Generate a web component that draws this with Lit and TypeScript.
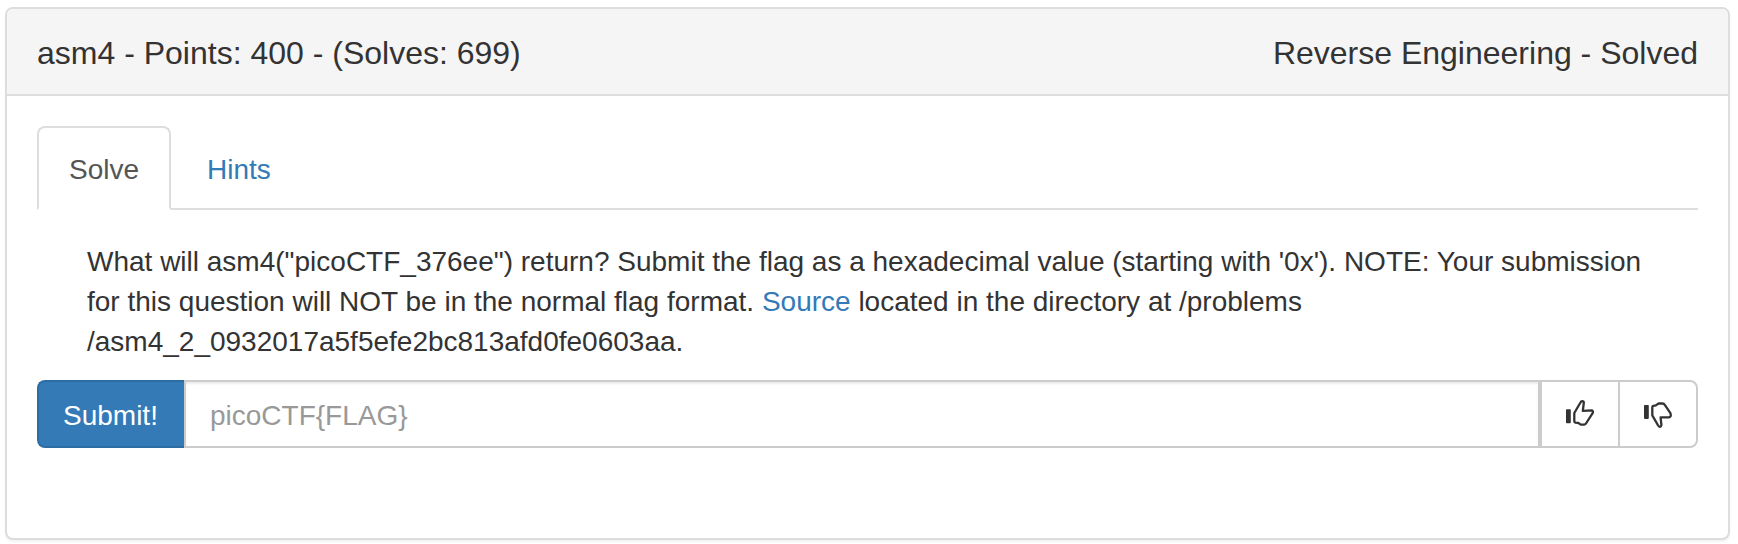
import { LitElement, html, css } from "lit";
import { customElement, state } from "lit/decorators.js";

@customElement("app-root")
export class AppRoot extends LitElement {
  static styles = css`
    :host {
      display: block;
      padding: 7px 8px 4px 5px;
      font-family: "Liberation Sans", Arial, sans-serif;
      font-size: 28px;
      line-height: 40px;
      color: #333;
      background: #fff;
    }
    * {
      box-sizing: border-box;
    }
    a {
      color: #337ab7;
      text-decoration: none;
    }
    .panel {
      border: 2px solid #ddd;
      border-radius: 8px;
      background: #fff;
      box-shadow: 0 2px 2px rgba(0, 0, 0, 0.05);
    }
    .heading {
      display: flex;
      justify-content: space-between;
      gap: 30px;
      padding: 27px 30px 23px;
      border-bottom: 2px solid #ddd;
      border-radius: 6px 6px 0 0;
      background: #f5f5f5;
    }
    .title {
      margin: 0;
      font-size: 32px;
      font-weight: 400;
      line-height: 35px;
    }
    .body {
      padding: 30px 30px 90px;
    }
    .tabs {
      display: flex;
      gap: 4px;
      border-bottom: 2px solid #ddd;
    }
    .tab {
      margin-bottom: -2px;
      padding: 22px 30px 18px;
      border: 2px solid transparent;
      border-radius: 8px 8px 0 0;
    }
    .tab.active {
      color: #555;
      background: #fff;
      border-color: #ddd #ddd #fff;
    }
    .description {
      margin: 0;
      padding: 32px 50px 18px;
    }
    .path {
      white-space: nowrap;
    }
    .entry {
      display: flex;
    }
    .btn,
    .flag {
      margin: 0;
      padding: 14px 24px 10px;
      border: 2px solid #ccc;
      border-radius: 0;
      font: inherit;
      color: #333;
      background: #fff;
    }
    .submit {
      color: #fff;
      background: #337ab7;
      border-color: #2e6da4;
      border-right: 0;
      padding-right: 26px;
      border-radius: 8px 0 0 8px;
    }
    .flag {
      flex: 1;
      min-width: 0;
      height: 68px;
      color: #555;
      box-shadow: inset 0 2px 2px rgba(0, 0, 0, 0.075);
    }
    .flag::placeholder {
      color: #999;
      opacity: 1;
    }
    .vote {
      display: flex;
      align-items: center;
      padding: 12px 24px;
    }
    .vote + .vote {
      margin-left: -2px;
      border-radius: 0 8px 8px 0;
    }
    .icon {
      display: block;
      width: 28px;
      height: 28px;
    }
  `;

  @state() private flag = "";

  render() {
    return html`
      <section class="panel">
        <header class="heading">
          <h3 class="title">asm4 - Points: 400 - (Solves: 699)</h3>
          <h3 class="title">Reverse Engineering - Solved</h3>
        </header>
        <div class="body">
          <nav class="tabs">
            <a class="tab active" href="#solve" aria-current="true">Solve</a>
            <a class="tab" href="#hints">Hints</a>
          </nav>
          <p class="description">
            What will asm4("picoCTF_376ee") return? Submit the flag as a
            hexadecimal value (starting with '0x'). NOTE: Your submission for
            this question will NOT be in the normal flag format.
            <a href="#source">Source</a> located in the directory at
            /problems<wbr /><span class="path"
              >/asm4_2_0932017a5f5efe2bc813afd0fe0603aa.</span
            >
          </p>
          <form class="entry" @submit=${(e: Event) => e.preventDefault()}>
            <button class="btn submit" type="submit">Submit!</button>
            <input
              class="flag"
              type="text"
              aria-label="Flag"
              placeholder="picoCTF{FLAG}"
              .value=${this.flag}
              @input=${(e: Event) =>
                (this.flag = (e.target as HTMLInputElement).value)}
            />
            <button class="btn vote" type="button" aria-label="Thumbs up">
              <svg class="icon" viewBox="0 0 28 28" aria-hidden="true">
                <rect x="0" y="9.3" width="4.8" height="14" rx="0.8" fill="#333" />
                <path
                  d="M8.3 13 L14.2 3 Q15 1.2 16.3 1.2 Q17.9 1.3 17.8 3 L16.8 10.8 L25.8 10.4 Q27.4 11 26.8 12.8 L20.3 23 Q19.6 24.5 18.2 24.6 H14.8 L12 22.8 L9.4 22.6 Q8.3 22.2 8.3 21 Z"
                  fill="none"
                  stroke="#333"
                  stroke-width="2.3"
                  stroke-linejoin="round"
                />
              </svg>
            </button>
            <button class="btn vote" type="button" aria-label="Thumbs down">
              <svg class="icon" viewBox="0 0 28 28" aria-hidden="true">
                <rect x="0" y="4.9" width="4.8" height="14" rx="0.8" fill="#333" />
                <path
                  d="M8.3 7.2 Q8.3 6 9.4 5.8 L11.8 5.4 L14.6 3.5 H18.4 Q20 3.5 20.8 4.8 L26.4 13.2 Q27.6 17 25 17.3 L16.6 17.4 L17.4 25.2 Q17.2 26.8 15.8 26.8 Q14.8 26.7 14 25.3 L8.3 15.4 Z"
                  fill="none"
                  stroke="#333"
                  stroke-width="2.3"
                  stroke-linejoin="round"
                />
              </svg>
            </button>
          </form>
        </div>
      </section>
    `;
  }
}
